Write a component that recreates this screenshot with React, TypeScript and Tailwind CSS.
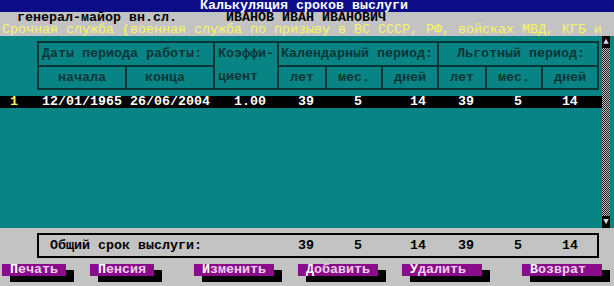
import React from "react";

const mono = "font-['Liberation_Mono','DejaVu_Sans_Mono',monospace] text-[13.33px] leading-[12px]";

function Btn({ label, w, ml }: { label: string; w: string; ml: string }) {
  return (
    <div className={`${w} ${ml} h-[12px] bg-[#8a0c8a] shadow-[8px_6px_0_0_#000] pl-[8px] font-bold whitespace-pre`}>
      <span className="text-white">{label[0]}</span>
      <span className="text-[#ecd0ec]">{label.slice(1)}</span>
    </div>
  );
}

export default function App() {
  const head = "text-[#0b3636] font-bold bg-[#088484] h-full flex items-center";

  return (
    <div className={`w-[614px] h-[286px] overflow-hidden bg-[#c3c3c3] ${mono}`}>
      {/* title bar */}
      <div className="h-[12px] bg-[#0c0c88] text-white font-bold pl-[200px] whitespace-pre">
        Калькуляция сроков выслуги
      </div>
      {/* person row */}
      <div className="h-[12px] flex text-black font-bold whitespace-pre">
        <span className="pl-[17px] w-[226px]">генерал-майор вн.сл.</span>
        <span>ИВАНОВ ИВАН ИВАНОВИЧ</span>
      </div>
      <div className="h-[12px] pl-[2px] text-[#f8f858] whitespace-pre">
        Срочная служба (военная служба по призыву в ВС СССР, РФ, войсках МВД, КГБ и
      </div>

      {/* teal area */}
      <div className="h-[192px] bg-[#088484] flex">
        <div className="w-[602px] pt-[5px]">
          <div className="ml-[37px] w-[562px] h-[49px] border-2 border-[#0b3636] bg-[#0b3636] grid gap-[2px] grid-cols-[86px_86px_62px_46px_54px_54px_46px_54px_54px] grid-rows-[22px_21px]">
            <div className={`${head} col-span-2 pl-[3px]`}>Даты периода работы:</div>
            <div className="row-span-2 bg-[#088484] flex flex-col text-[#0b3636] font-bold pl-[3px]">
              <div className="h-[22px] flex items-center">Коэффи-</div>
              <div className="h-[23px] flex items-center">циент</div>
            </div>
            <div className={`${head} col-span-3 pl-[2px]`}>Календарный период:</div>
            <div className={`${head} col-span-3 pl-[18px]`}>Льготный период:</div>
            <div className={`${head} justify-center`}>начала</div>
            <div className={`${head} pl-[18px]`}>конца</div>
            <div className={`${head} justify-center`}>лет</div>
            <div className={`${head} justify-center`}>мес.</div>
            <div className={`${head} justify-center`}>дней</div>
            <div className={`${head} justify-center`}>лет</div>
            <div className={`${head} justify-center`}>мес.</div>
            <div className={`${head} justify-center`}>дней</div>
          </div>
          <div className="mt-[6px] h-[12px] bg-black pl-[2px] font-bold whitespace-pre text-white">
            <span className="text-[#f8f858]"> 1</span>
            {"   12/01/1965 26/06/2004   1.00    39     5      14    39     5     14"}
          </div>
        </div>
        {/* scrollbar */}
        <div className="w-[8px] flex flex-col">
          <div className="h-[12px] bg-black text-[#d8d8d8] text-[9px] leading-[12px] flex justify-center">▲</div>
          <div className="flex-1 bg-[image:repeating-conic-gradient(#bdbdbd_0%_25%,#202020_0%_50%)] bg-[length:2px_2px]"></div>
          <div className="h-[12px] bg-black text-[#d8d8d8] text-[9px] leading-[12px] flex justify-center">▼</div>
        </div>
      </div>

      {/* summary */}
      <div className="pt-[5px]">
        <div className="ml-[37px] w-[562px] h-[25px] border-2 border-black flex items-center pl-[11px] text-black font-bold whitespace-pre">
          {"Общий срок выслуги:            39     5      14    39     5     14"}
        </div>
      </div>

      {/* buttons */}
      <div className="mt-[6px] flex">
        <Btn label="Печать" w="w-[64px]" ml="ml-[2px]" />
        <Btn label="Пенсия" w="w-[64px]" ml="ml-[24px]" />
        <Btn label="Изменить" w="w-[80px]" ml="ml-[40px]" />
        <Btn label="Добавить" w="w-[80px]" ml="ml-[24px]" />
        <Btn label="Удалить" w="w-[80px]" ml="ml-[24px]" />
        <Btn label="Возврат" w="w-[80px]" ml="ml-[40px]" />
      </div>
    </div>
  );
}
